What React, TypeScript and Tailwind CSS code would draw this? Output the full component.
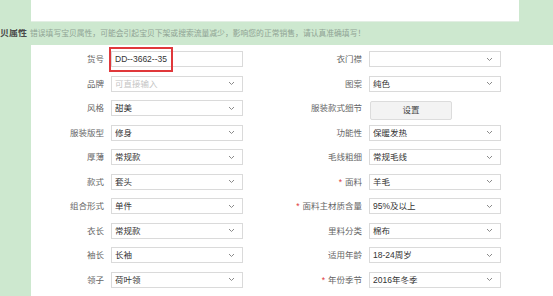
import React from 'react';

type Field = {
    label: string;
    value?: string;
    placeholder?: string;
    required?: boolean;
    kind?: 'text' | 'select' | 'button';
};

const leftFields: Field[] = [
    { label: '货号', value: 'DD--3662--35', kind: 'text' },
    { label: '品牌', placeholder: '可直接输入' },
    { label: '风格', value: '甜美' },
    { label: '服装版型', value: '修身' },
    { label: '厚薄', value: '常规款' },
    { label: '款式', value: '套头' },
    { label: '组合形式', value: '单件' },
    { label: '衣长', value: '常规款' },
    { label: '袖长', value: '长袖' },
    { label: '领子', value: '荷叶领' },
];

const rightFields: Field[] = [
    { label: '衣门襟', value: '' },
    { label: '图案', value: '纯色' },
    { label: '服装款式细节', value: '设置', kind: 'button' },
    { label: '功能性', value: '保暖发热' },
    { label: '毛线粗细', value: '常规毛线' },
    { label: '面料', value: '羊毛', required: true },
    { label: '面料主材质含量', value: '95%及以上', required: true },
    { label: '里料分类', value: '棉布' },
    { label: '适用年龄', value: '18-24周岁' },
    { label: '年份季节', value: '2016年冬季', required: true },
];

const Chevron = () => (
    <svg width="7" height="5" viewBox="0 0 7 5" className="shrink-0">
        <path d="M1 1 L3.5 3.5 L6 1" fill="none" stroke="#8a8a8a" strokeWidth="1" />
    </svg>
);

const Control: React.FC<{ field: Field; highlight?: boolean }> = ({ field, highlight }) => {
    if (field.kind === 'button') {
        return (
            <div className="ml-[8px] w-[82px] h-[19px] mt-[4px] bg-[#f3f3f3] border border-[#dcdcdc] rounded-[2px] flex items-center justify-center text-[#444]">
                {field.value}
            </div>
        );
    }
    return (
        <div className="relative ml-[7px] w-[132px] h-[16px] border border-[#dadada] bg-white flex items-center pl-[3px] pr-[7px]">
            {field.value ? (
                <span className="flex-1 text-[#333] truncate">{field.value}</span>
            ) : (
                <span className="flex-1 text-[#c4c4c4]">{field.placeholder}</span>
            )}
            {field.kind !== 'text' && <Chevron />}
            {highlight && (
                <div className="absolute left-[-3px] top-[-5px] w-[64px] h-[25px] border-2 border-[#e0383b]" />
            )}
        </div>
    );
};

const Row: React.FC<{ field: Field; labelWidth: string; highlight?: boolean }> = ({ field, labelWidth, highlight }) => (
    <div className="h-[24.5px] flex items-center">
        <div className={`${labelWidth} text-right text-[#666] whitespace-nowrap`}>
            {field.required && <span className="text-[#e0383b] mr-[3px]">*</span>}
            {field.label}
        </div>
        <Control field={field} highlight={highlight} />
    </div>
);

export default function App() {
    return (
        <div
            className="w-[553px] h-[296px] overflow-hidden bg-[#cde8cf] flex flex-col text-[8.5px] leading-none"
            style={{ fontFamily: '"Liberation Sans", "Noto Sans CJK SC", sans-serif' }}
        >
            {/* top description box */}
            <div className="ml-[31px] w-[488px] h-[22px] shrink-0 bg-white border-b border-[#e2eee3]" />

            {/* hint */}
            <div className="h-[23px] shrink-0 flex items-center">
                <span className="w-[30px] font-bold text-[#4a4a4a] text-[9px] whitespace-nowrap overflow-hidden">贝属性</span>
                <span className="text-[#8fa394] text-[7.8px] whitespace-nowrap">
                    错误填写宝贝属性，可能会引起宝贝下架或搜索流量减少，影响您的正常销售，请认真准确填写！
                </span>
            </div>

            {/* attribute panel */}
            <div className="ml-[31px] flex-1 bg-white pt-[2px] flex">
                <div className="w-[212px] flex flex-col">
                    {leftFields.map((f, i) => (
                        <Row key={f.label} field={f} labelWidth="w-[73px]" highlight={i === 0} />
                    ))}
                </div>
                <div className="flex flex-col">
                    {rightFields.map((f) => (
                        <Row key={f.label} field={f} labelWidth="w-[119px]" />
                    ))}
                </div>
            </div>
        </div>
    );
}
